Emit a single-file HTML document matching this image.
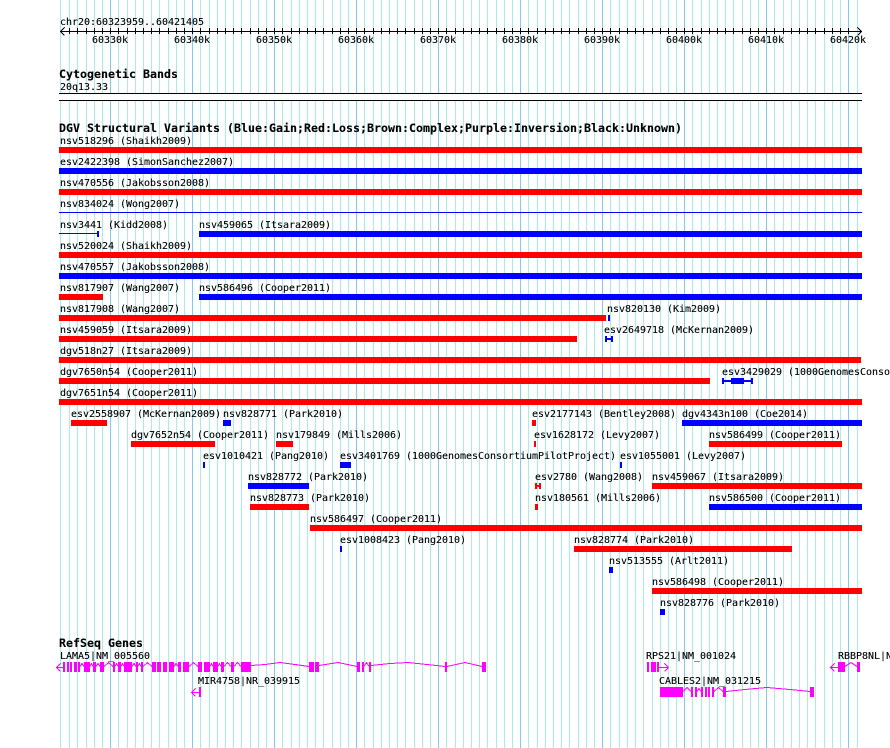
<!DOCTYPE html>
<html>
<head>
<meta charset="utf-8">
<style>
html,body{margin:0;padding:0;background:#fff;width:890px;height:748px;overflow:hidden}
svg{display:block}
text{font-family:"DejaVu Sans Mono","Liberation Mono",monospace;font-size:10px;fill:#000;stroke:#000;stroke-width:.12px;white-space:pre;letter-spacing:-.02px}
text.b{font-weight:bold;font-size:11.6px;letter-spacing:.02px}
</style>
</head>
<body>
<svg width="890" height="748" viewBox="0 0 890 748" xmlns="http://www.w3.org/2000/svg">
<g shape-rendering="crispEdges">
<path fill="none" stroke="#a8ecf0" d="M60.5 0V748M69.5 0V748M77.5 0V748M86.5 0V748M94.5 0V748M102.5 0V748M118.5 0V748M127.5 0V748M135.5 0V748M143.5 0V748M151.5 0V748M159.5 0V748M168.5 0V748M176.5 0V748M184.5 0V748M200.5 0V748M209.5 0V748M217.5 0V748M225.5 0V748M233.5 0V748M241.5 0V748M250.5 0V748M258.5 0V748M266.5 0V748M282.5 0V748M291.5 0V748M299.5 0V748M307.5 0V748M315.5 0V748M323.5 0V748M332.5 0V748M340.5 0V748M348.5 0V748M364.5 0V748M373.5 0V748M381.5 0V748M389.5 0V748M397.5 0V748M405.5 0V748M414.5 0V748M422.5 0V748M430.5 0V748M446.5 0V748M455.5 0V748M463.5 0V748M471.5 0V748M479.5 0V748M487.5 0V748M496.5 0V748M504.5 0V748M512.5 0V748M528.5 0V748M537.5 0V748M545.5 0V748M553.5 0V748M561.5 0V748M569.5 0V748M578.5 0V748M586.5 0V748M594.5 0V748M610.5 0V748M619.5 0V748M627.5 0V748M635.5 0V748M643.5 0V748M652.5 0V748M660.5 0V748M668.5 0V748M676.5 0V748M692.5 0V748M701.5 0V748M709.5 0V748M717.5 0V748M725.5 0V748M733.5 0V748M742.5 0V748M750.5 0V748M758.5 0V748M774.5 0V748M783.5 0V748M791.5 0V748M799.5 0V748M807.5 0V748M815.5 0V748M824.5 0V748M832.5 0V748M840.5 0V748M857.5 0V748"/>
<path fill="none" stroke="#80cbf2" d="M110.5 0V748M192.5 0V748M274.5 0V748M356.5 0V748M438.5 0V748M520.5 0V748M602.5 0V748M684.5 0V748M766.5 0V748M848.5 0V748"/>
<rect x="59" y="93" width="803" height="8" fill="#fff"/>
<rect x="59" y="93" width="803" height="1" fill="#000"/>
<rect x="59" y="100" width="803" height="1" fill="#000"/>

<!-- ruler -->
<path fill="none" stroke="#000" d="M60 31.5H862M60.5 31.5L64.5 27.5M60.5 31.5L64.5 35.5M861.5 31.5L857.5 27.5M861.5 31.5L857.5 35.5"/>
<path fill="none" stroke="#000" d="M69.5 28V34M77.5 28V34M86.5 28V34M94.5 28V34M102.5 28V34M110.5 28V34M118.5 28V34M127.5 28V34M135.5 28V34M143.5 28V34M151.5 28V34M159.5 28V34M168.5 28V34M176.5 28V34M184.5 28V34M192.5 28V34M200.5 28V34M209.5 28V34M217.5 28V34M225.5 28V34M233.5 28V34M241.5 28V34M250.5 28V34M258.5 28V34M266.5 28V34M274.5 28V34M282.5 28V34M291.5 28V34M299.5 28V34M307.5 28V34M315.5 28V34M323.5 28V34M332.5 28V34M340.5 28V34M348.5 28V34M356.5 28V34M364.5 28V34M373.5 28V34M381.5 28V34M389.5 28V34M397.5 28V34M405.5 28V34M414.5 28V34M422.5 28V34M430.5 28V34M438.5 28V34M446.5 28V34M455.5 28V34M463.5 28V34M471.5 28V34M479.5 28V34M487.5 28V34M496.5 28V34M504.5 28V34M512.5 28V34M520.5 28V34M528.5 28V34M537.5 28V34M545.5 28V34M553.5 28V34M561.5 28V34M569.5 28V34M578.5 28V34M586.5 28V34M594.5 28V34M602.5 28V34M610.5 28V34M619.5 28V34M627.5 28V34M635.5 28V34M643.5 28V34M652.5 28V34M660.5 28V34M668.5 28V34M676.5 28V34M684.5 28V34M692.5 28V34M701.5 28V34M709.5 28V34M717.5 28V34M725.5 28V34M733.5 28V34M742.5 28V34M750.5 28V34M758.5 28V34M766.5 28V34M774.5 28V34M783.5 28V34M791.5 28V34M799.5 28V34M807.5 28V34M815.5 28V34M824.5 28V34M832.5 28V34M840.5 28V34M848.5 28V34"/>

<!-- red bars -->
<g fill="#f00">
<rect x="59" y="147" width="803" height="6"/>
<rect x="59" y="189" width="803" height="6"/>
<rect x="59" y="252" width="803" height="6"/>
<rect x="59" y="294" width="44" height="6"/>
<rect x="59" y="315" width="547" height="6"/>
<rect x="59" y="336" width="518" height="6"/>
<rect x="59" y="357" width="802" height="6"/>
<rect x="59" y="378" width="651" height="6"/>
<rect x="59" y="399" width="803" height="6"/>
<rect x="71" y="420" width="36" height="6"/>
<rect x="532" y="420" width="4" height="6"/>
<rect x="131" y="441" width="84" height="6"/>
<rect x="276" y="441" width="17" height="6"/>
<rect x="534" y="441" width="2" height="6"/>
<rect x="709" y="441" width="133" height="6"/>
<rect x="535" y="483" width="2" height="6"/>
<rect x="539" y="483" width="2" height="6"/>
<rect x="535" y="485" width="6" height="2"/>
<rect x="652" y="483" width="210" height="6"/>
<rect x="250" y="504" width="59" height="6"/>
<rect x="535" y="504" width="3" height="6"/>
<rect x="310" y="525" width="552" height="6"/>
<rect x="574" y="546" width="218" height="6"/>
<rect x="652" y="588" width="210" height="6"/>
</g>
<!-- blue bars -->
<g fill="#00f">
<rect x="59" y="168" width="803" height="6"/>
<rect x="59" y="212" width="803" height="1"/>
<rect x="59" y="233" width="40" height="1"/>
<rect x="97" y="231" width="2" height="6"/>
<rect x="199" y="231" width="663" height="6"/>
<rect x="59" y="273" width="803" height="6"/>
<rect x="199" y="294" width="663" height="6"/>
<rect x="608" y="315" width="2" height="6"/>
<rect x="605" y="336" width="2" height="6"/>
<rect x="611" y="336" width="2" height="6"/>
<rect x="605" y="338" width="8" height="2"/>
<rect x="722" y="378" width="2" height="6"/>
<rect x="751" y="378" width="2" height="6"/>
<rect x="722" y="380" width="30" height="2"/>
<rect x="731" y="378" width="13" height="6"/>
<rect x="223" y="420" width="8" height="6"/>
<rect x="682" y="420" width="180" height="6"/>
<rect x="203" y="462" width="2" height="6"/>
<rect x="340" y="462" width="11" height="6"/>
<rect x="620" y="462" width="2" height="6"/>
<rect x="248" y="483" width="61" height="6"/>
<rect x="709" y="504" width="153" height="6"/>
<rect x="340" y="546" width="2" height="6"/>
<rect x="609" y="567" width="4" height="6"/>
<rect x="660" y="609" width="5" height="6"/>
</g>

<!-- genes -->
<g fill="#f0f">
<rect x="63" y="662" width="2" height="10"/><rect x="67" y="662" width="2" height="10"/><rect x="70" y="662" width="2" height="10"/><rect x="74" y="662" width="3" height="10"/><rect x="78" y="662" width="2" height="10"/><rect x="84" y="662" width="6" height="10"/><rect x="93" y="662" width="3" height="10"/><rect x="100" y="662" width="4" height="10"/><rect x="113" y="662" width="2" height="10"/><rect x="118" y="662" width="3" height="10"/><rect x="124" y="662" width="8" height="10"/><rect x="136" y="662" width="2" height="10"/><rect x="141" y="662" width="2" height="10"/><rect x="152" y="662" width="4" height="10"/><rect x="157" y="662" width="4" height="10"/><rect x="163" y="662" width="4" height="10"/><rect x="169" y="662" width="5" height="10"/><rect x="178" y="662" width="3" height="10"/><rect x="183" y="662" width="6" height="10"/><rect x="198" y="662" width="4" height="10"/><rect x="204" y="662" width="6" height="10"/><rect x="213" y="662" width="5" height="10"/><rect x="221" y="662" width="3" height="10"/><rect x="231" y="662" width="3" height="10"/><rect x="241" y="662" width="10" height="10"/>
<rect x="309" y="662" width="5" height="10"/><rect x="315" y="662" width="4" height="10"/><rect x="357" y="662" width="3" height="10"/><rect x="362" y="662" width="2" height="10"/><rect x="369" y="662" width="2" height="10"/><rect x="445" y="662" width="2" height="10"/><rect x="482" y="662" width="4" height="10"/>
<rect x="199" y="687" width="2" height="10"/>
<rect x="647" y="662" width="2" height="10"/><rect x="651" y="662" width="5" height="10"/><rect x="657" y="662" width="2" height="10"/>
<rect x="838" y="662" width="7" height="10"/><rect x="857" y="662" width="3" height="10"/>
<rect x="660" y="687" width="23" height="10"/><rect x="691" y="687" width="2" height="10"/><rect x="695" y="687" width="2" height="10"/><rect x="701" y="687" width="2" height="10"/><rect x="705" y="687" width="2" height="10"/><rect x="708" y="687" width="2" height="10"/><rect x="712" y="687" width="2" height="10"/><rect x="723" y="687" width="3" height="10"/><rect x="810" y="687" width="4" height="10"/>
</g>
<path fill="none" stroke="#f0f" d="M56 667.5H63M56.5 667.5L60.5 663.5M56.5 667.5L60.5 671.5M80 666.5L82 663.5L84 666.5M90 666.5L91.5 663.5L93 666.5M96 666.5L98 663.5L100 666.5M104 666.5L108.5 662.5L113 666.5M115 666.5L116.5 663.5L118 666.5M121 666.5L122.5 663.5L124 666.5M132 666.5L134 663.5L136 666.5M138 666.5L139.5 663.5L141 666.5M143 666.5L147.5 662.5L152 666.5M174 666.5L176 663.5L178 666.5M189 666.5L193.5 662.5L198 666.5M210 666.5L211.5 663.5L213 666.5M218 666.5L219.5 663.5L221 666.5M224 666.5L227.5 662.5L231 666.5M234 666.5L237.5 662.5L241 666.5M251 665.5L265 664.5L280 662.5L295 664.5L309 666.5M319 665.5L338 662.5L357 666.5M364 666.5L366.5 662.5L369 666.5M371 665.5L390 663.5L408 662.5L427 664.5L445 666.5M447 666.5L465 662.5L482 666.5M191 692.5H199M191.5 692.5L195.5 688.5M191.5 692.5L195.5 696.5M659 667.5H668M668.5 667.5L664.5 663.5M668.5 667.5L664.5 671.5M830 667.5H838M830.5 667.5L834.5 663.5M830.5 667.5L834.5 671.5M845 666.5L851 662.5L857 666.5M683 691.5L687 687.5L691 691.5M697 691.5L699 688.5L701 691.5M714 691.5L718.5 687.5L723 691.5M726 691.5L745 689.5L767 687.5L790 689.5L810 691.5"/>
</g>

<!-- text -->
<text x="60" y="25">chr20:60323959..60421405</text>
<text x="92" y="43">60330k</text><text x="174" y="43">60340k</text><text x="256" y="43">60350k</text><text x="338" y="43">60360k</text><text x="420" y="43">60370k</text><text x="502" y="43">60380k</text><text x="584" y="43">60390k</text><text x="666" y="43">60400k</text><text x="748" y="43">60410k</text><text x="830" y="43">60420k</text>
<text class="b" x="59" y="78">Cytogenetic Bands</text>
<text x="60" y="90">20q13.33</text>
<text class="b" x="59" y="132">DGV Structural Variants (Blue:Gain;Red:Loss;Brown:Complex;Purple:Inversion;Black:Unknown)</text>
<text x="60" y="144">nsv518296 (Shaikh2009)</text>
<text x="60" y="165">esv2422398 (SimonSanchez2007)</text>
<text x="60" y="186">nsv470556 (Jakobsson2008)</text>
<text x="60" y="207">nsv834024 (Wong2007)</text>
<text x="60" y="228">nsv3441 (Kidd2008)</text>
<text x="199" y="228">nsv459065 (Itsara2009)</text>
<text x="60" y="249">nsv520024 (Shaikh2009)</text>
<text x="60" y="270">nsv470557 (Jakobsson2008)</text>
<text x="60" y="291">nsv817907 (Wang2007)</text>
<text x="199" y="291">nsv586496 (Cooper2011)</text>
<text x="60" y="312">nsv817908 (Wang2007)</text>
<text x="607" y="312">nsv820130 (Kim2009)</text>
<text x="60" y="333">nsv459059 (Itsara2009)</text>
<text x="604" y="333">esv2649718 (McKernan2009)</text>
<text x="60" y="354">dgv518n27 (Itsara2009)</text>
<text x="60" y="375">dgv7650n54 (Cooper2011)</text>
<text x="722" y="375">esv3429029 (1000GenomesConsortiumPilotProject)</text>
<text x="60" y="396">dgv7651n54 (Cooper2011)</text>
<text x="71" y="417">esv2558907 (McKernan2009)</text>
<text x="223" y="417">nsv828771 (Park2010)</text>
<text x="532" y="417">esv2177143 (Bentley2008)</text>
<text x="682" y="417">dgv4343n100 (Coe2014)</text>
<text x="131" y="438">dgv7652n54 (Cooper2011)</text>
<text x="276" y="438">nsv179849 (Mills2006)</text>
<text x="534" y="438">esv1628172 (Levy2007)</text>
<text x="709" y="438">nsv586499 (Cooper2011)</text>
<text x="203" y="459">esv1010421 (Pang2010)</text>
<text x="340" y="459">esv3401769 (1000GenomesConsortiumPilotProject)</text>
<text x="620" y="459">esv1055001 (Levy2007)</text>
<text x="248" y="480">nsv828772 (Park2010)</text>
<text x="535" y="480">esv2780 (Wang2008)</text>
<text x="652" y="480">nsv459067 (Itsara2009)</text>
<text x="250" y="501">nsv828773 (Park2010)</text>
<text x="535" y="501">nsv180561 (Mills2006)</text>
<text x="709" y="501">nsv586500 (Cooper2011)</text>
<text x="310" y="522">nsv586497 (Cooper2011)</text>
<text x="340" y="543">esv1008423 (Pang2010)</text>
<text x="574" y="543">nsv828774 (Park2010)</text>
<text x="609" y="564">nsv513555 (Arlt2011)</text>
<text x="652" y="585">nsv586498 (Cooper2011)</text>
<text x="660" y="606">nsv828776 (Park2010)</text>
<text class="b" x="59" y="647">RefSeq Genes</text>
<text x="60" y="659">LAMA5|NM_005560</text>
<text x="646" y="659">RPS21|NM_001024</text>
<text x="838" y="659">RBBP8NL|NM_152284</text>
<text x="198" y="684">MIR4758|NR_039915</text>
<text x="659" y="684">CABLES2|NM_031215</text>
</svg>
</body>
</html>
